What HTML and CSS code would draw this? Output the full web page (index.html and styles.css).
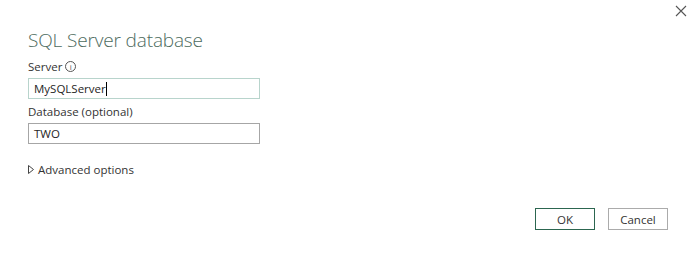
FILE: index.html
```html
<!DOCTYPE html>
<html>
<head>
<meta charset="utf-8">
<link rel="stylesheet" href="styles.css">
</head>
<body>
<div class="dialog">
  <button class="close" aria-label="Close">
    <svg width="12" height="12" viewBox="0 0 12 12"><path d="M1 1L11 11M11 1L1 11" stroke="#555" stroke-width="1.1" fill="none"/></svg>
  </button>
  <h1 class="title">SQL Server database</h1>
  <div class="field">
    <label class="label">Server <span class="info">i</span></label>
    <div class="input focused">MySQLServer<span class="caret"></span></div>
  </div>
  <div class="field">
    <label class="label">Database (optional)</label>
    <div class="input">TWO</div>
  </div>
  <div class="advanced">
    <svg class="tri" width="6" height="9" viewBox="0 0 6 9"><path d="M0.5 0.5L5.5 4.5L0.5 8.5Z" fill="none" stroke="#444" stroke-width="1"/></svg>
    <span>Advanced options</span>
  </div>
  <div class="buttons">
    <button class="btn primary">OK</button>
    <button class="btn">Cancel</button>
  </div>
</div>
</body>
</html>
```
FILE: styles.css
```css
* { box-sizing: border-box; }
html, body { margin: 0; padding: 0; background: #fff; }
body { font-family: "Open Sans", "Noto Sans", sans-serif; color: #252525; }
.dialog { position: relative; width: 698px; height: 260px; padding: 26px 0 0 28px; }
.close { position: absolute; top: 5px; right: 11px; width: 12px; height: 12px; padding: 0; border: 0; background: none; display: flex; }
.title { margin: 0; font-weight: 300; font-size: 19px; line-height: 28px; color: #4d6b5e; letter-spacing: -0.15px; }
.field { margin-top: 4px; }
.field + .field { margin-top: 4px; }
.label { display: flex; align-items: center; gap: 3px; font-size: 11.5px; line-height: 17px; color: #333; }
.info { display: inline-flex; width: 11px; height: 11px; border: 1px solid #555; border-radius: 50%; font-size: 8px; line-height: 1; align-items: center; justify-content: center; color: #555; }
.input { margin-top: 3px; width: 232px; height: 21px; border: 1px solid #a6a6a6; font-size: 11.5px; line-height: 19px; padding: 0 5px; display: flex; align-items: center; }
.input.focused { border-color: #b8d4cc; }
.caret { display: inline-block; width: 1px; height: 14px; background: #000; }
.advanced { margin-top: 17px; display: flex; align-items: center; gap: 4px; font-size: 11.5px; line-height: 17px; color: #333; }
.buttons { display: flex; gap: 13px; justify-content: flex-end; padding-right: 30px; margin-top: 30px; }
.btn { width: 60px; height: 22px; border: 1px solid #ababab; background: #fff; font-family: inherit; font-size: 11.5px; color: #333; padding: 0; }
.btn.primary { border-color: #2c6650; }
```
